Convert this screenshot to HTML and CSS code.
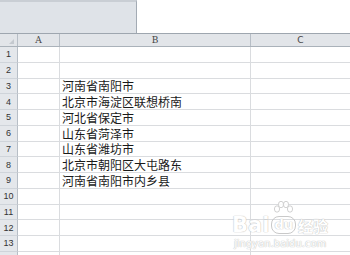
FILE: index.html
```html
<!DOCTYPE html>
<html lang="zh-CN">
<head>
  <meta charset="UTF-8" />
  <title>sheet</title>
  <link rel="stylesheet" href="styles.css">
</head>
<body>
  <div class="top">
    <div class="panel"></div>
  </div>

  <div class="sheet">
    <div class="row head">
      <div class="rh corner"><span class="tri"></span></div>
      <div class="cell a">A</div>
      <div class="cell b">B</div>
      <div class="cell c">C</div>
    </div>
    <div class="row"><div class="rh">1</div><div class="cell a"></div><div class="cell b"></div><div class="cell c"></div></div>
    <div class="row"><div class="rh">2</div><div class="cell a"></div><div class="cell b"></div><div class="cell c"></div></div>
    <div class="row"><div class="rh">3</div><div class="cell a"></div><div class="cell b">河南省南阳市</div><div class="cell c"></div></div>
    <div class="row"><div class="rh">4</div><div class="cell a"></div><div class="cell b">北京市海淀区联想桥南</div><div class="cell c"></div></div>
    <div class="row"><div class="rh">5</div><div class="cell a"></div><div class="cell b">河北省保定市</div><div class="cell c"></div></div>
    <div class="row"><div class="rh">6</div><div class="cell a"></div><div class="cell b">山东省菏泽市</div><div class="cell c"></div></div>
    <div class="row"><div class="rh">7</div><div class="cell a"></div><div class="cell b">山东省潍坊市</div><div class="cell c"></div></div>
    <div class="row"><div class="rh">8</div><div class="cell a"></div><div class="cell b">北京市朝阳区大屯路东</div><div class="cell c"></div></div>
    <div class="row"><div class="rh">9</div><div class="cell a"></div><div class="cell b">河南省南阳市内乡县</div><div class="cell c"></div></div>
    <div class="row"><div class="rh">10</div><div class="cell a"></div><div class="cell b"></div><div class="cell c"></div></div>
    <div class="row"><div class="rh">11</div><div class="cell a"></div><div class="cell b"></div><div class="cell c"></div></div>
    <div class="row"><div class="rh">12</div><div class="cell a"></div><div class="cell b"></div><div class="cell c"></div></div>
    <div class="row"><div class="rh">13</div><div class="cell a"></div><div class="cell b"></div><div class="cell c"></div></div>
    <div class="row"><div class="rh"></div><div class="cell a"></div><div class="cell b"></div><div class="cell c"></div></div>
  </div>

  <!-- watermark -->
  <div class="mark">
    <div class="logo">
      <span class="bai">Bai</span>
      <span class="du">
        <svg class="paw" width="20" height="16" viewBox="0 0 20 16">
          <ellipse cx="4" cy="8" rx="2.6" ry="3.2" />
          <ellipse cx="8" cy="3.5" rx="2.6" ry="3.2" />
          <ellipse cx="13" cy="3.5" rx="2.6" ry="3.2" />
          <ellipse cx="17" cy="8" rx="2.6" ry="3.2" />
        </svg>
        du
      </span>
      <span class="jy">经验</span>
    </div>
    <div class="url">jingyan.baidu.com</div>
  </div>
</body>
</html>
```

FILE: styles.css
```css
* {
  margin: 0;
  padding: 0;
  box-sizing: border-box;
}

body {
  width: 350px;
  height: 255px;
  overflow: hidden;
  background: #fff;
  font-family: "Liberation Sans", Arial, sans-serif;
  position: relative;
}

.top {
  height: 33px;
  display: flex;
}

.panel {
  width: 137px;
  height: 33px;
  background: #dfe3e8;
  border-top: 2px solid #c9ced4;
  border-right: 1px solid #a3abb4;
}

.sheet {
  height: 222px;
  overflow: hidden;
}

.row {
  display: flex;
  height: 15.75px;
}

.row.head {
  height: 14px;
  background: #e2e5e9;
  border-top: 1px solid #9ea6af;
  border-bottom: 1px solid #aab2ba;
  font-family: "DejaVu Serif", serif;
  font-size: 9px;
  color: #444;
}

.rh {
  width: 18px;
  flex: none;
  background: #e4e7eb;
  border-right: 1px solid #b7bec6;
  border-bottom: 1px solid #cfd4da;
  font-size: 9px;
  color: #333;
  display: flex;
  align-items: center;
  justify-content: center;
}

.head .rh {
  border-bottom: none;
  background: #e2e5e9;
  position: relative;
}

.tri {
  position: absolute;
  right: 3px;
  bottom: 2px;
  width: 0;
  height: 0;
  border-left: 5px solid transparent;
  border-bottom: 5px solid #c4c9cf;
}

.cell {
  flex: none;
  border-right: 1px solid #dadcdf;
  border-bottom: 1px solid #dadcdf;
  display: flex;
  align-items: center;
  font-family: "Noto Sans CJK SC", sans-serif;
  font-size: 12px;
  color: #1a1a1a;
  white-space: nowrap;
}

.cell.a { width: 42px; }
.cell.b { width: 191px; padding-left: 2px; }
.cell.c { flex: 1; border-right: none; }

.head .cell {
  justify-content: center;
  border-right: 1px solid #b7bec6;
  border-bottom: none;
  font-family: "DejaVu Serif", serif;
  font-size: 9px;
  color: #444;
}

.head .cell.b { padding-left: 0; }
.head .cell.c { border-right: none; font-family: "DejaVu Sans", sans-serif; }

.mark {
  position: absolute;
  left: 232px;
  top: 202px;
  color: #fff;
  opacity: 0.9;
}

.logo {
  display: flex;
  align-items: flex-end;
  gap: 2px;
}

.bai, .du, .jy, .url {
  text-shadow: 0 0 1px #b9b9b9, 0 0 1px #b9b9b9;
}

.bai {
  font-family: "DejaVu Sans", sans-serif;
  font-weight: bold;
  font-size: 21px;
  line-height: 22px;
  margin-top: 12px;
}

.du {
  position: relative;
  font-family: "DejaVu Sans", sans-serif;
  font-weight: bold;
  font-size: 13px;
  line-height: 16px;
  padding: 0 2px;
  border: 1px solid #c4c4c4;
  border-radius: 8px;
  margin-bottom: 2px;
}

.paw {
  position: absolute;
  left: 1px;
  top: -16px;
  fill: #fff;
  stroke: #c0c0c0;
  stroke-width: 0.8;
}

.jy {
  font-family: "Noto Sans CJK SC", sans-serif;
  font-weight: bold;
  font-size: 15px;
  line-height: 20px;
}

.url {
  font-family: "DejaVu Sans", sans-serif;
  font-size: 10px;
  margin-top: 2px;
  margin-left: 2px;
}
```
